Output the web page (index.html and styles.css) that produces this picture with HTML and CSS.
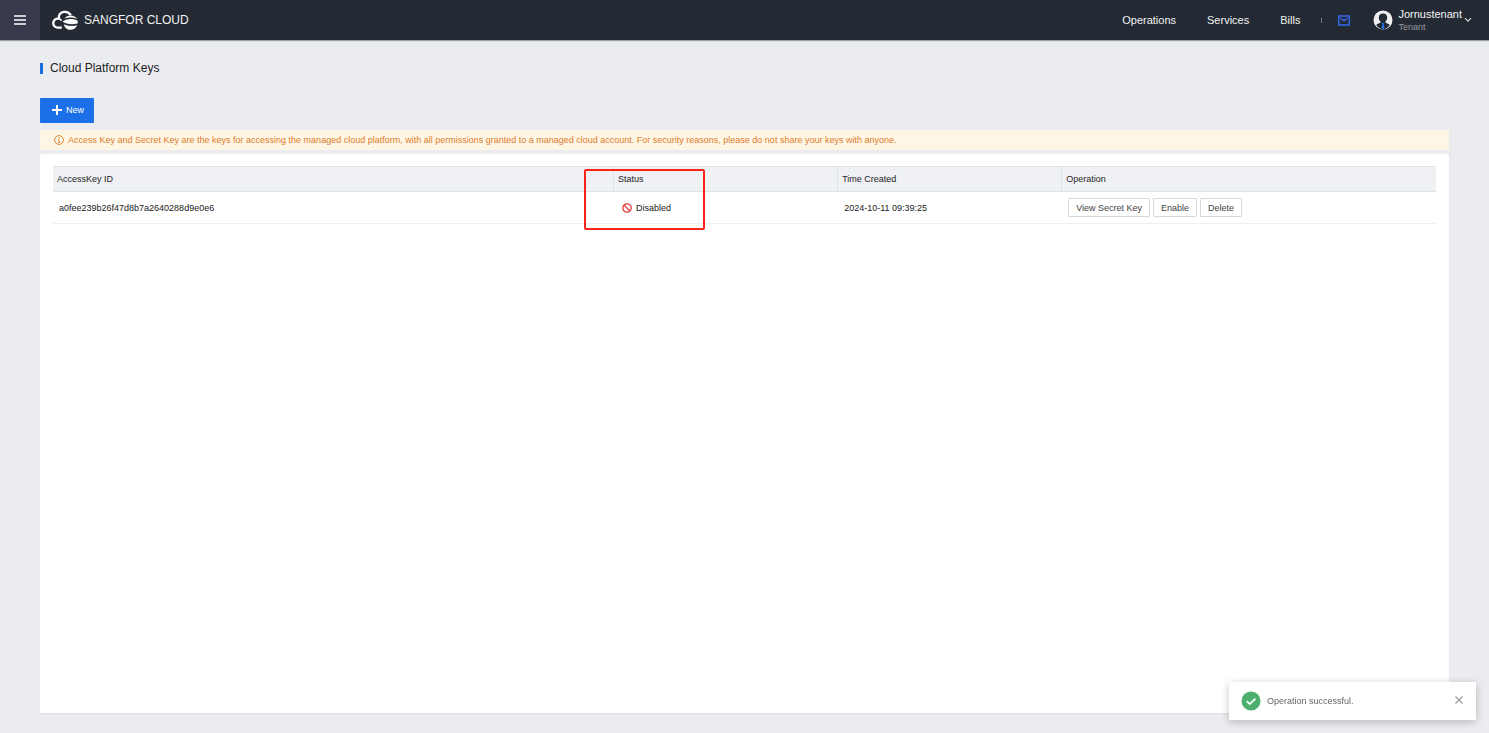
FILE: index.html
```html
<!DOCTYPE html>
<html lang="en">
<head>
<meta charset="utf-8">
<meta name="viewport" content="width=device-width, initial-scale=1">
<title>Cloud Platform Keys</title>
<link rel="stylesheet" href="styles.css">
</head>
<body>
<header class="topbar">
  <button class="menu-button" type="button" aria-label="Menu">
    <svg width="12" height="10" viewBox="0 0 12 10" fill="none" stroke="#fff" stroke-width="1.6"><path d="M0 1h12M0 5h12M0 9h12"/></svg>
  </button>
  <a class="brand" href="#">
    <svg width="26" height="20" viewBox="0 0 26 20" fill="none">
      <path d="M9.800 17.600H6A4.400 4.400 0 0 1 5.400 8.700L6.800 8.600C6.600 4.800 8.800 2.300 12 1.900C15 1.500 17.400 2.800 18.800 5.200" stroke="#fff" stroke-width="2.300"/>
      <path d="M6.500 8.700C8 8.900 9 9.600 9.600 10.600" stroke="#fff" stroke-width="1.600"/>
      <path d="M12.500 8.400C13.800 6.400 16 5.400 18.700 5.400S23.600 6.800 25 9C20.700 7.100 16.300 7.100 12.500 8.400Z" fill="#fff"/>
      <path d="M10.500 11.600C15 8.500 20.800 8.400 25.700 10.800V13.400C20.500 14.800 14.500 14.500 10.500 11.600Z" fill="#fff"/>
      <path d="M11.800 14.200C15.500 16 20.300 16.500 25.200 15.200C23.700 18.300 21.500 19.800 18.400 19.800C15 19.800 12.600 17.600 11.800 14.200Z" fill="#fff"/>
    </svg>
    <span>SANGFOR CLOUD</span>
  </a>
  <nav class="nav">
    <a href="#">Operations</a>
    <a href="#">Services</a>
    <a href="#">Bills</a>
  </nav>
  <span class="separator"></span>
  <button class="mail-button" type="button" aria-label="Messages">
    <svg width="12" height="11" viewBox="0 0 12 11" fill="none" stroke="#3566ee" stroke-width="1.500"><path d="M.7.9h10.600v9.200H.7zM2.400 3L6 5.800 9.600 3"/></svg>
  </button>
  <button class="account" type="button">
    <svg width="20" height="20" viewBox="0 0 20 20">
      <circle cx="10" cy="10" r="9.500" fill="#f0f0f1"/>
      <path d="M10 3.500c2.800 0 4.300 1.800 4.200 4.200-.1 2-1 3.400-2 4.200.3 1.100 3.300 1.400 4.500 3.200A9.400 9.400 0 0 1 10 19.500 9.400 9.400 0 0 1 3.300 15.100c1.200-1.800 4.200-2.100 4.500-3.200-1-.8-1.900-2.200-2-4.200C5.700 5.300 7.200 3.500 10 3.500Z" fill="#242a33"/>
      <path d="M8.800 13h2.400l-.5 1.500.9 3.500-1.600 1.500L8.400 18l.9-3.500Z" fill="#1b73e8"/>
    </svg>
    <span class="account-text">
      <span class="account-name">Jornustenant</span>
      <span class="account-role">Tenant</span>
    </span>
    <svg width="8" height="6" viewBox="0 0 8 6" fill="none" stroke="#d5d7da" stroke-width="1.200"><path d="M1 1.200l3 3 3-3"/></svg>
  </button>
</header>
<main class="page">
  <h1 class="title">Cloud Platform Keys</h1>
  <button class="new-button" type="button">
    <svg width="10" height="10" viewBox="0 0 10 10" stroke="#fff" stroke-width="2"><path d="M5 0v10M0 5h10"/></svg>
    <span>New</span>
  </button>
  <p class="notice">
    <svg width="10" height="10" viewBox="0 0 10 10" fill="none" stroke="#e07b2c" stroke-width=".9"><circle cx="5" cy="5" r="4.400"/><path d="M5 2.100v1.200M4.300 4.400H5V7.500M4 7.500h2"/></svg>
    <span>Access Key and Secret Key are the keys for accessing the managed cloud platform, with all permissions granted to a managed cloud account. For security reasons, please do not share your keys with anyone.</span>
  </p>
  <section class="panel">
    <table class="keys">
      <colgroup><col class="col-id"><col class="col-status"><col class="col-time"><col class="col-operation"></colgroup>
      <thead>
        <tr><th>AccessKey ID</th><th class="status-head">Status</th><th>Time Created</th><th>Operation</th></tr>
      </thead>
      <tbody>
        <tr>
          <td>a0fee239b26f47d8b7a2640288d9e0e6</td>
          <td>
            <span class="status">
              <svg width="10" height="10" viewBox="0 0 10 10" fill="none" stroke="#e03c3c" stroke-width="1.300"><circle cx="5" cy="5" r="4.200"/><path d="M2 2l6 6"/></svg>
              Disabled
            </span>
          </td>
          <td>2024-10-11 09:39:25</td>
          <td>
            <div class="actions">
              <button type="button">View Secret Key</button>
              <button type="button">Enable</button>
              <button type="button">Delete</button>
            </div>
          </td>
        </tr>
      </tbody>
    </table>
  </section>
</main>
<div class="toast" role="status">
  <svg width="20" height="20" viewBox="0 0 20 20" fill="none"><circle cx="10" cy="10" r="9.500" fill="#4caf6e"/><path d="M5.800 10.200l3 2.900 5.600-5.500" stroke="#fff" stroke-width="1.800"/></svg>
  <span class="toast-text">Operation successful.</span>
  <button class="toast-close" type="button" aria-label="Close">
    <svg width="8" height="8" viewBox="0 0 8 8" stroke="#999" stroke-width="1.100"><path d="M.5.5l7 7M7.500.5l-7 7"/></svg>
  </button>
</div>
</body>
</html>
```
FILE: styles.css
```css
*,
*::before,
*::after {
  box-sizing: border-box;
}

body {
  margin: 0;
  min-height: 100vh;
  display: flex;
  flex-direction: column;
  background: #ebecf0;
  color: #222;
  font: 9px/12px "Liberation Sans", Arial, sans-serif;
}

button {
  margin: 0;
  padding: 0;
  border: 0;
  background: none;
  color: inherit;
  font: inherit;
  cursor: pointer;
}

a {
  color: inherit;
  text-decoration: none;
}

svg {
  display: block;
  flex: none;
}

.topbar {
  display: flex;
  align-items: center;
  height: 40px;
  padding-right: 17px;
  background: #242a33;
  box-shadow: 0 1px 1px #9a9da2;
  color: #f2f3f4;
}

.menu-button {
  display: flex;
  align-items: center;
  justify-content: center;
  width: 40px;
  height: 40px;
  background: #373a4d;
}

.brand {
  display: flex;
  align-items: center;
  gap: 6px;
  margin-left: 12px;
  font-size: 12px;
  line-height: 16px;
}

.nav {
  display: flex;
  gap: 31px;
  margin-left: auto;
  font-size: 11px;
  line-height: 16px;
}

.separator {
  width: 1px;
  height: 5px;
  margin: 0 16px 0 21px;
  background: #777b82;
}

.account {
  display: flex;
  align-items: center;
  gap: 2px;
  margin-left: 23px;
}

.account-text {
  display: flex;
  flex-direction: column;
  margin-left: 3px;
  text-align: left;
}

.account-name {
  font-size: 11px;
  line-height: 14px;
}

.account-role {
  color: #95989d;
}

.page {
  flex: 1;
  display: flex;
  flex-direction: column;
  align-items: stretch;
  padding: 20px 40px;
}

.title {
  display: flex;
  align-items: center;
  gap: 7px;
  margin: 0;
  font-size: 12px;
  font-weight: 400;
  line-height: 16px;
}

.title::before {
  content: "";
  width: 3px;
  height: 11px;
  background: #1a6fe0;
}

.new-button {
  display: flex;
  align-items: center;
  align-self: flex-start;
  gap: 4px;
  height: 25px;
  margin-top: 22px;
  padding: 0 10px 1px 12px;
  border-radius: 1px;
  background: #1b70e8;
  color: #fff;
}

.notice {
  display: flex;
  align-items: center;
  gap: 4px;
  margin: 7px 0 4px;
  padding: 4px 14px;
  background: #fef6e4;
  color: #e07b2c;
}

.panel {
  flex: 1;
  padding: 12px 13px;
  border-radius: 2px;
  background: #fff;
  box-shadow: 0 1px 1px #dcdee2;
}

.keys {
  width: 100%;
  table-layout: fixed;
  border-collapse: separate;
  border-spacing: 0;
}

.col-id {
  width: 40.5%;
}

.col-status,
.col-time {
  width: 16.2%;
}

.keys th {
  height: 26px;
  padding: 0 4px 1px;
  border: solid #dfe2e7;
  border-width: 1px 0 1px 1px;
  background: #f0f1f5;
  font-weight: 400;
  text-align: left;
}

.keys th:first-child {
  border-left-width: 0;
}

.keys td {
  height: 32px;
  padding: 0 7px;
  border-bottom: 1px solid #efeff1;
}

.keys td:first-child {
  padding-left: 6px;
}

.status-head {
  position: relative;
}

.status-head::after {
  content: "";
  position: absolute;
  top: 2px;
  left: -30px;
  width: 121px;
  height: 61px;
  border: 2px solid #fb2418;
  border-radius: 2px;
}

.status {
  display: flex;
  align-items: center;
  gap: 4px;
  padding-left: 2px;
}

.actions {
  display: flex;
  gap: 3px;
}

.actions button {
  height: 19px;
  padding: 0 7px;
  border: 1px solid #d6d9e0;
  border-radius: 1px;
  background: #fff;
  color: #444;
}

.toast {
  position: fixed;
  right: 13px;
  bottom: 13px;
  display: flex;
  align-items: center;
  gap: 6px;
  width: 247px;
  height: 38px;
  padding: 0 13px 0 12px;
  background: #fff;
  box-shadow: 0 2px 8px rgba(0, 0, 0, .22);
  color: #666;
}

.toast-close {
  margin-left: auto;
  padding-bottom: 3px;
}
```
